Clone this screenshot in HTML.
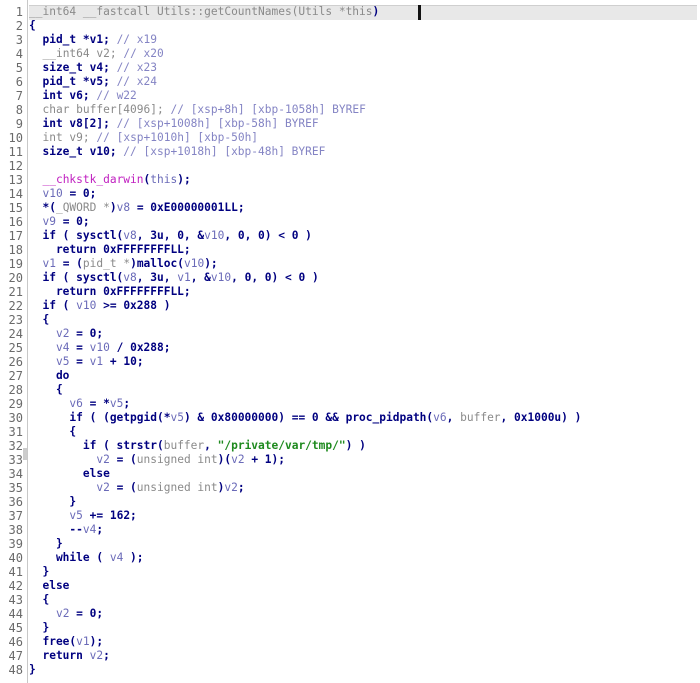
<!DOCTYPE html>
<html><head><meta charset="utf-8"><style>
html,body{margin:0;padding:0;background:#fff;width:700px;height:683px;overflow:hidden}
#w{position:relative;width:700px;height:683px}
.ln{position:absolute;left:0;width:23px;text-align:right;color:#6a6a6a;font-size:12px!important}
.gut{position:absolute;left:27px;top:0;width:1px;height:683px;background:#c8c8c8}
.code{position:absolute;left:29px;white-space:pre;color:#000080;font-weight:bold}
.row{position:absolute;font-family:"DejaVu Sans Mono","Liberation Mono",monospace;font-size:11.2px;line-height:14px;height:14px}
.v{color:#6a6ab8;font-weight:normal}
.c{color:#8484c4;font-weight:normal}
.g{color:#8a8a8a;font-weight:normal}
.s{color:#1f8a1f}
.f{color:#c020c0;font-weight:normal}
.hl{position:absolute;left:29px;top:5px;width:668px;height:14px;background:#e8e8e8;border-top:1px solid #cfcfcf}
.cur{position:absolute;left:418px;top:5px;width:3px;height:15px;background:#111}
.mk{position:absolute;left:23px;top:448px;width:4px;height:12px;background:#ccc}
</style></head><body><div id="w">
<div class="hl"></div><div class="cur"></div><div class="gut"></div><div class="mk"></div>
<div class="row ln" style="top:5px">1</div><div class="row code" style="top:5px"><span class="g">__int64 __fastcall Utils::getCountNames(Utils *this</span>)</div>
<div class="row ln" style="top:19px">2</div><div class="row code" style="top:19px">{</div>
<div class="row ln" style="top:33px">3</div><div class="row code" style="top:33px">  pid_t *v1; <span class="c">// x19</span></div>
<div class="row ln" style="top:47px">4</div><div class="row code" style="top:47px">  <span class="g">__int64 v2;</span> <span class="c">// x20</span></div>
<div class="row ln" style="top:61px">5</div><div class="row code" style="top:61px">  size_t v4; <span class="c">// x23</span></div>
<div class="row ln" style="top:75px">6</div><div class="row code" style="top:75px">  pid_t *v5; <span class="c">// x24</span></div>
<div class="row ln" style="top:89px">7</div><div class="row code" style="top:89px">  int v6; <span class="c">// w22</span></div>
<div class="row ln" style="top:103px">8</div><div class="row code" style="top:103px">  <span class="g">char buffer[4096];</span> <span class="c">// [xsp+8h] [xbp-1058h] BYREF</span></div>
<div class="row ln" style="top:117px">9</div><div class="row code" style="top:117px">  int v8[2]; <span class="c">// [xsp+1008h] [xbp-58h] BYREF</span></div>
<div class="row ln" style="top:131px">10</div><div class="row code" style="top:131px">  <span class="g">int v9;</span> <span class="c">// [xsp+1010h] [xbp-50h]</span></div>
<div class="row ln" style="top:145px">11</div><div class="row code" style="top:145px">  size_t v10; <span class="c">// [xsp+1018h] [xbp-48h] BYREF</span></div>
<div class="row ln" style="top:159px">12</div><div class="row code" style="top:159px"></div>
<div class="row ln" style="top:173px">13</div><div class="row code" style="top:173px">  <span class="f">__chkstk_darwin</span>(<span class="v">this</span>);</div>
<div class="row ln" style="top:187px">14</div><div class="row code" style="top:187px">  <span class="v">v10</span> = 0;</div>
<div class="row ln" style="top:201px">15</div><div class="row code" style="top:201px">  *(<span class="g">_QWORD *</span>)<span class="v">v8</span> = 0xE00000001LL;</div>
<div class="row ln" style="top:215px">16</div><div class="row code" style="top:215px">  <span class="v">v9</span> = 0;</div>
<div class="row ln" style="top:229px">17</div><div class="row code" style="top:229px">  if ( sysctl(<span class="v">v8</span>, 3u, 0, &amp;<span class="v">v10</span>, 0, 0) &lt; 0 )</div>
<div class="row ln" style="top:243px">18</div><div class="row code" style="top:243px">    return 0xFFFFFFFFLL;</div>
<div class="row ln" style="top:257px">19</div><div class="row code" style="top:257px">  <span class="v">v1</span> = (<span class="g">pid_t *</span>)malloc(<span class="v">v10</span>);</div>
<div class="row ln" style="top:271px">20</div><div class="row code" style="top:271px">  if ( sysctl(<span class="v">v8</span>, 3u, <span class="v">v1</span>, &amp;<span class="v">v10</span>, 0, 0) &lt; 0 )</div>
<div class="row ln" style="top:285px">21</div><div class="row code" style="top:285px">    return 0xFFFFFFFFLL;</div>
<div class="row ln" style="top:299px">22</div><div class="row code" style="top:299px">  if ( <span class="v">v10</span> &gt;= 0x288 )</div>
<div class="row ln" style="top:313px">23</div><div class="row code" style="top:313px">  {</div>
<div class="row ln" style="top:327px">24</div><div class="row code" style="top:327px">    <span class="v">v2</span> = 0;</div>
<div class="row ln" style="top:341px">25</div><div class="row code" style="top:341px">    <span class="v">v4</span> = <span class="v">v10</span> / 0x288;</div>
<div class="row ln" style="top:355px">26</div><div class="row code" style="top:355px">    <span class="v">v5</span> = <span class="v">v1</span> + 10;</div>
<div class="row ln" style="top:369px">27</div><div class="row code" style="top:369px">    do</div>
<div class="row ln" style="top:383px">28</div><div class="row code" style="top:383px">    {</div>
<div class="row ln" style="top:397px">29</div><div class="row code" style="top:397px">      <span class="v">v6</span> = *<span class="v">v5</span>;</div>
<div class="row ln" style="top:411px">30</div><div class="row code" style="top:411px">      if ( (getpgid(*<span class="v">v5</span>) &amp; 0x80000000) == 0 &amp;&amp; proc_pidpath(<span class="v">v6</span>, <span class="g">buffer</span>, 0x1000u) )</div>
<div class="row ln" style="top:425px">31</div><div class="row code" style="top:425px">      {</div>
<div class="row ln" style="top:439px">32</div><div class="row code" style="top:439px">        if ( strstr(<span class="g">buffer</span>, <span class="s">"/private/var/tmp/"</span>) )</div>
<div class="row ln" style="top:453px">33</div><div class="row code" style="top:453px">          <span class="v">v2</span> = (<span class="g">unsigned int</span>)(<span class="v">v2</span> + 1);</div>
<div class="row ln" style="top:467px">34</div><div class="row code" style="top:467px">        else</div>
<div class="row ln" style="top:481px">35</div><div class="row code" style="top:481px">          <span class="v">v2</span> = (<span class="g">unsigned int</span>)<span class="v">v2</span>;</div>
<div class="row ln" style="top:495px">36</div><div class="row code" style="top:495px">      }</div>
<div class="row ln" style="top:509px">37</div><div class="row code" style="top:509px">      <span class="v">v5</span> += 162;</div>
<div class="row ln" style="top:523px">38</div><div class="row code" style="top:523px">      --<span class="v">v4</span>;</div>
<div class="row ln" style="top:537px">39</div><div class="row code" style="top:537px">    }</div>
<div class="row ln" style="top:551px">40</div><div class="row code" style="top:551px">    while ( <span class="v">v4</span> );</div>
<div class="row ln" style="top:565px">41</div><div class="row code" style="top:565px">  }</div>
<div class="row ln" style="top:579px">42</div><div class="row code" style="top:579px">  else</div>
<div class="row ln" style="top:593px">43</div><div class="row code" style="top:593px">  {</div>
<div class="row ln" style="top:607px">44</div><div class="row code" style="top:607px">    <span class="v">v2</span> = 0;</div>
<div class="row ln" style="top:621px">45</div><div class="row code" style="top:621px">  }</div>
<div class="row ln" style="top:635px">46</div><div class="row code" style="top:635px">  free(<span class="v">v1</span>);</div>
<div class="row ln" style="top:649px">47</div><div class="row code" style="top:649px">  return <span class="v">v2</span>;</div>
<div class="row ln" style="top:663px">48</div><div class="row code" style="top:663px">}</div>
</div></body></html>
